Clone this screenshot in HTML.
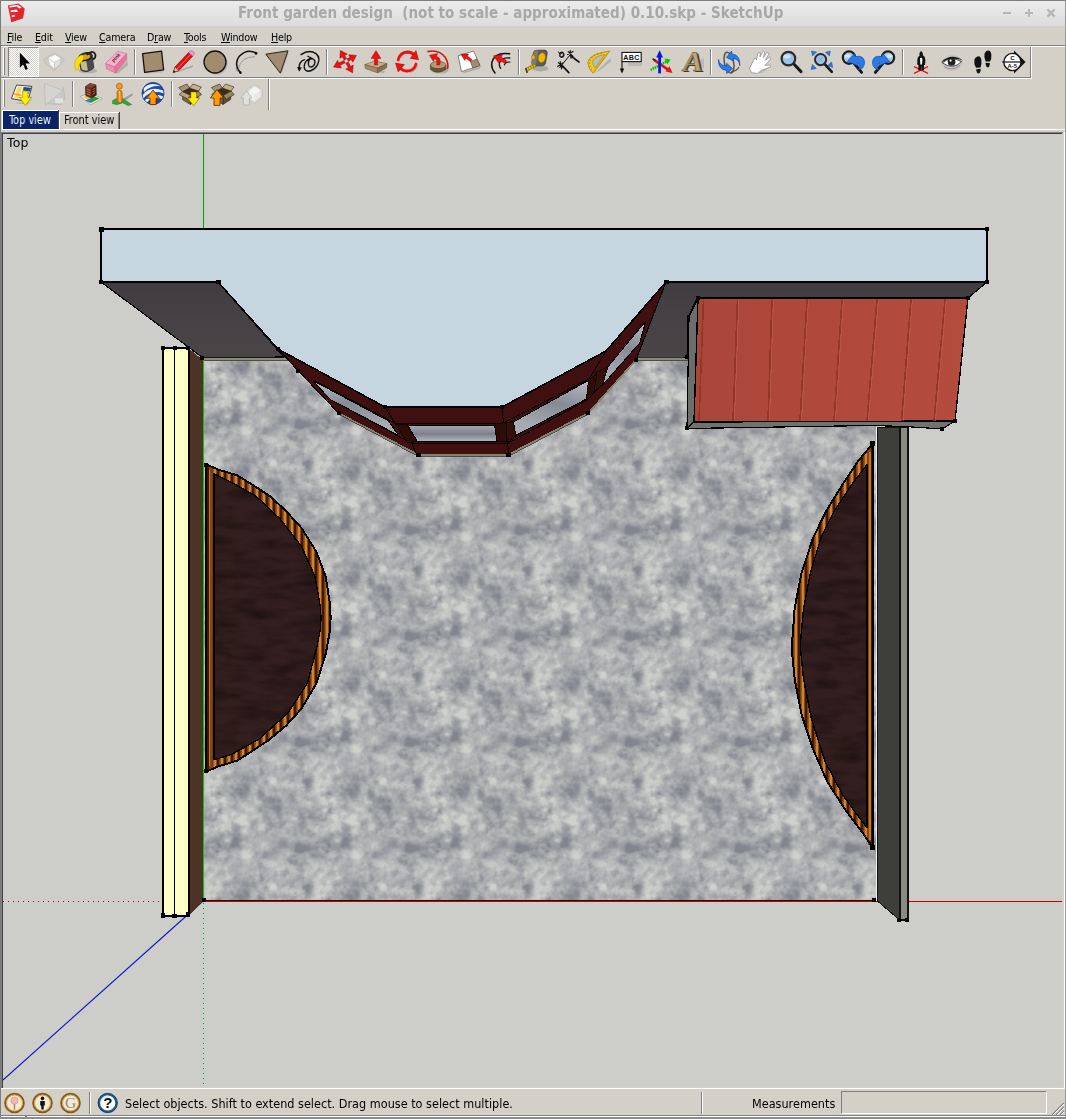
<!DOCTYPE html>
<html>
<head>
<meta charset="utf-8">
<title>Front garden design (not to scale - approximated) 0.10.skp - SketchUp</title>
<style>
html,body{margin:0;padding:0;}
body{width:1066px;height:1119px;position:relative;overflow:hidden;background:#d4d0c8;font-family:"DejaVu Sans Condensed","DejaVu Sans","Liberation Sans",sans-serif;font-size:11px;color:#000;}
.abs{position:absolute;}
.mi,.stext,.tab,#title,.vlabel{will-change:transform;}
svg{position:absolute;overflow:visible;}
#titlebar{left:0;top:0;width:1066px;height:26px;background:linear-gradient(#ececec,#dcdcdc);}
#title{left:238px;top:4px;font-family:"DejaVu Sans Condensed","DejaVu Sans","Liberation Sans",sans-serif;font-weight:bold;font-size:15px;line-height:18px;color:#a8a8a8;white-space:pre;letter-spacing:0.03px;}
.wbtn{top:2px;font-family:"DejaVu Sans","Liberation Sans",sans-serif;font-weight:bold;font-size:14px;line-height:18px;color:#b9b9b9;}
.mi{top:31px;font-size:10.67px;letter-spacing:-0.22px;line-height:14px;white-space:nowrap;}
.ln{position:absolute;}
.dk{background:#808080;}
.wh{background:#ffffff;}
#vp{left:3px;top:134px;width:1059px;height:953px;background:#cdcec9;overflow:hidden;}
.stext{top:1096px;font-size:12.5px;letter-spacing:0.02px;line-height:15px;white-space:nowrap;}
.tab{font-size:12px;transform:scaleX(.905);transform-origin:0 0;line-height:14px;white-space:nowrap;}
</style>
</head>
<body>

<!-- title bar -->
<div class="abs" id="titlebar"></div>
<div class="abs" id="title">Front garden design  (not to scale - approximated) 0.10.skp - SketchUp</div>
<svg style="left:1000px;top:6px" width="60" height="14" viewBox="1000 6 60 14"><g stroke="#b6b6b6" stroke-width="2" fill="none"><path d="M1003 13 L1011 13"/><path d="M1025 13 L1033 13 M1029 9 L1029 17"/><path d="M1047.4 9.4 L1054.6 16.6 M1054.6 9.4 L1047.4 16.6" stroke-width="2.4"/></g></svg>
<svg style="left:0px;top:0px" width="30" height="26" viewBox="0 0 30 26"><path d="M7.8 5.6 L18.6 3.6 L24.6 8.4 L23 18.2 L11.3 22.2Z" fill="#e8282e"/><path d="M7.8 5.6 L14.6 9.8 L11.3 22.2Z" fill="#e02026" opacity=".0"/><path d="M16.2 10.6 L24.6 8.4 L23 18.2 L11.3 22.2 Z" fill="#dc2228" opacity=".55"/>
<path d="M9.4 6 L17.6 4.8 L21.6 7.6 L19.6 8.6 L16.6 6.6 L9.8 7.6Z" fill="#fff"/><path d="M10.6 10.6 L16.4 9.6 L18.2 11.4 L15.2 12.2 L14.6 11.4 L11 12.2Z" fill="#fff"/><path d="M11.6 15.4 L14.6 14.8 L15 16.4 L12 17Z" fill="#fff"/></svg>

<!-- menu bar -->
<div class="abs mi" style="left:7px"><u>F</u>ile</div>
<div class="abs mi" style="left:35px"><u>E</u>dit</div>
<div class="abs mi" style="left:65px"><u>V</u>iew</div>
<div class="abs mi" style="left:99px"><u>C</u>amera</div>
<div class="abs mi" style="left:147px">D<u>r</u>aw</div>
<div class="abs mi" style="left:184px"><u>T</u>ools</div>
<div class="abs mi" style="left:221px"><u>W</u>indow</div>
<div class="abs mi" style="left:271px"><u>H</u>elp</div>

<!-- toolbar frames -->
<div class="ln dk" style="left:1px;top:45px;width:1064px;height:1px"></div>
<div class="ln wh" style="left:1px;top:46px;width:1064px;height:1px"></div>
<div class="ln dk" style="left:1px;top:77px;width:1030px;height:1px"></div>
<div class="ln wh" style="left:1px;top:78px;width:1031px;height:1px"></div>
<div class="ln dk" style="left:1030px;top:47px;width:1px;height:31px"></div>
<div class="ln wh" style="left:1031px;top:47px;width:1px;height:31px"></div>
<div class="ln dk" style="left:268px;top:79px;width:1px;height:31px"></div>
<div class="ln wh" style="left:269px;top:79px;width:1px;height:31px"></div>
<!-- grippers -->
<div class="ln wh" style="left:3px;top:48px;width:1px;height:27px"></div>
<div class="ln dk" style="left:4px;top:48px;width:1px;height:27px"></div>
<div class="ln wh" style="left:3px;top:80px;width:1px;height:27px"></div>
<div class="ln dk" style="left:4px;top:80px;width:1px;height:27px"></div>

<!-- tabs -->
<div class="ln wh" style="left:2px;top:110px;width:57px;height:1px"></div>
<div class="ln wh" style="left:2px;top:110px;width:1px;height:19px"></div>
<div class="abs" style="left:3px;top:111px;width:55px;height:18px;background:#0a246a"></div>
<div class="ln" style="left:58px;top:110px;width:1px;height:19px;background:#404040"></div>
<div class="abs tab" style="left:9px;top:113px;color:#fff">Top view</div>
<div class="ln wh" style="left:60px;top:112px;width:59px;height:1px"></div>
<div class="ln wh" style="left:59px;top:112px;width:1px;height:17px"></div>
<div class="ln" style="left:119px;top:112px;width:1px;height:17px;background:#404040"></div>
<div class="ln dk" style="left:118px;top:113px;width:1px;height:16px"></div>
<div class="abs tab" style="left:64px;top:113px">Front view</div>
<div class="ln wh" style="left:2px;top:129px;width:1063px;height:1px"></div>

<!-- viewport sunken border -->
<div class="ln dk" style="left:1px;top:132px;width:1062px;height:1px"></div>
<div class="ln" style="left:2px;top:133px;width:1060px;height:1px;background:#404040"></div>
<div class="ln dk" style="left:1px;top:132px;width:1px;height:956px"></div>
<div class="ln" style="left:2px;top:133px;width:1px;height:955px;background:#404040"></div>
<div class="ln wh" style="left:1064px;top:132px;width:1px;height:956px"></div>
<div class="ln" style="left:1062px;top:133px;width:2px;height:955px;background:#d4d0c8"></div>

<!-- toolbar icons -->
<div class="abs" style="left:8px;top:47px;width:29px;height:28px;border:1px solid;border-color:#808080 #fff #fff #808080;background-color:#fff;background-image:conic-gradient(#d4d0c8 25%,#fff 0 50%,#d4d0c8 0 75%,#fff 0);background-size:2px 2px;"></div>
<svg style="left:11px;top:50px" width="24" height="24" viewBox="0 0 24 24"><path transform="translate(-.7 -.7)" d="M9.5 3.2 L9.5 18.6 L12.8 15.2 L15.2 20.6 L17.6 19.6 L15.2 14.2 L19.8 14.2 Z" fill="#000" stroke="#fff" stroke-width="1.2" stroke-linejoin="round" paint-order="stroke"/></svg>
<svg style="left:42px;top:50px" width="24" height="24" viewBox="0 0 24 24"><g opacity=".55"><path d="M2 9 L12 3 L22 9 L22 11 L12 21 L2 11Z" fill="#c9c9c9" stroke="#aaa" stroke-width=".8"/></g>
<path d="M6 8 L13 4.5 L19 8.5 L12.5 12.5Z" fill="#fff" stroke="#bbb" stroke-width=".5"/><path d="M6 8 L12.5 12.5 L12.5 19 L7.5 14.5Z" fill="#f4f4f4" stroke="#bbb" stroke-width=".5"/><path d="M12.5 12.5 L19 8.5 L18 14.5 L12.5 19Z" fill="#e2e2e2" stroke="#bbb" stroke-width=".5"/></svg>
<svg style="left:73px;top:50px" width="24" height="24" viewBox="0 0 24 24"><g transform="translate(12 12) scale(1.14) translate(-12.4 -12.2)"><ellipse cx="15" cy="20" rx="8" ry="2.2" fill="#9a9a9a" opacity=".6"/>
<path d="M7 9 L9 19 Q14 22.5 20 17 L18.5 7Z" fill="#c9bb8a" stroke="#2a2a2a" stroke-width="1"/>
<path d="M13 8 L15 20 Q18.5 19.5 20 17 L18.5 7Z" fill="#4a4a4a"/>
<ellipse cx="12.8" cy="7.6" rx="6" ry="3.4" transform="rotate(-14 12.8 7.6)" fill="#3a3a3a" stroke="#1a1a1a" stroke-width="1"/>
<ellipse cx="12.6" cy="7.8" rx="4.4" ry="2.2" transform="rotate(-14 12.6 7.8)" fill="#d9a400"/>
<path d="M14 6 Q19 1 21.5 5.5 Q22 9 19 10" fill="none" stroke="#1a1a1a" stroke-width="1.6"/>
<path d="M9 6 Q3 9 3.4 16 Q4 20 6.2 19.5 Q6.5 14 10.5 10.5 Q12 9 11 6.8Z" fill="#ffe000" stroke="#caa000" stroke-width=".5"/>
<path d="M5.4 20.4 Q6.4 22.6 5.2 23.4 Q4.2 22.6 5.4 20.4Z" fill="#ffe000"/></g></svg>
<svg style="left:104px;top:50px" width="24" height="24" viewBox="0 0 24 24"><path d="M11 23.4 L23.4 11 L24 15 L14 23.6Z" fill="#8c8c8c" opacity=".5"/>
<path d="M1.6 13.6 L13.6 1.2 L22.6 3.6 L10.6 17Z" fill="#f9b0c8" stroke="#b86084" stroke-width=".5"/>
<path d="M1.6 13.6 L10.6 17 L11.4 23 L2.6 19Z" fill="#f48cb0" stroke="#b86084" stroke-width=".5"/>
<path d="M10.6 17 L22.6 3.6 L22.8 9.6 L11.4 23Z" fill="#ea74a0" stroke="#b86084" stroke-width=".5"/>
<text x="0" y="0" transform="translate(9.6 12.4) rotate(-47)" font-size="5" font-weight="bold" font-family="Liberation Sans,sans-serif" fill="#5a2040">pink</text></svg>
<svg style="left:141px;top:50px" width="24" height="24" viewBox="0 0 24 24"><path d="M4 22 L22 20.6 L21.4 22.6 L4.4 23.2Z" fill="#999" opacity=".5"/><path d="M1.6 3.6 L20.6 1.2 L22.6 19.8 L3.6 22.4Z" fill="#a38b6d" stroke="#111" stroke-width="1.3" stroke-linejoin="round"/></svg>
<svg style="left:172px;top:50px" width="24" height="24" viewBox="0 0 24 24"><path d="M4 21.6 L21.6 14.8 L20 17.6 L6 22Z" fill="#888" opacity=".55"/>
<path d="M1.2 22.6 L3 17 L16.6 2.6 L20.6 6.2 L6.8 20.6Z" fill="#e80c0c" stroke="#600" stroke-width=".6"/>
<path d="M16.6 2.6 L18.4 .8 Q20.8 .2 22.2 2.6 Q22.6 4 20.6 6.2Z" fill="#f79ac0" stroke="#a04070" stroke-width=".5"/>
<path d="M1.2 22.6 L3 17 L6.8 20.6Z" fill="#e6c890" stroke="#333" stroke-width=".5"/><path d="M1.2 22.6 L2 20.2 L3.6 21.7Z" fill="#111"/>
<path d="M5 19 L18.6 4.6" stroke="#ff7070" stroke-width="1"/></svg>
<svg style="left:203px;top:50px" width="24" height="24" viewBox="0 0 24 24"><ellipse cx="13.4" cy="13.6" rx="11" ry="11" fill="#888" opacity=".45"/><circle cx="12" cy="12" r="11" fill="#a38b6d" stroke="#111" stroke-width="1.3"/></svg>
<svg style="left:234px;top:50px" width="24" height="24" viewBox="0 0 24 24"><path d="M21 6.6 Q7 7 4.6 18" fill="none" stroke="#9a9a9a" stroke-width="1"/><path d="M2.4 17.6 Q1.6 19.6 4 21.6" fill="none" stroke="#999" stroke-width="1.2"/>
<path d="M22.6 3.2 Q13 -2.2 5 6.6 Q-0.5 14.4 6.6 23" fill="none" stroke="#111" stroke-width="1.5" stroke-linecap="round"/><circle cx="22" cy="3.4" r="1.3" fill="#111"/><circle cx="6.4" cy="22.6" r="1.3" fill="#111"/></svg>
<svg style="left:265px;top:50px" width="24" height="24" viewBox="0 0 24 24"><path d="M4 3.4 L24 2.4 L17 23Z" fill="#999" opacity=".45"/><path d="M.8 4.2 L23 .8 L15.4 23.2Z" fill="#a38b6d" stroke="#222" stroke-width="1" stroke-linejoin="round"/></svg>
<svg style="left:296px;top:50px" width="24" height="24" viewBox="0 0 24 24"><path d="M10 21 Q15 22 21 15" fill="none" stroke="#999" stroke-width="1"/>
<path d="M5 4.6 Q13 -1 20 3.6 Q25 8 21.6 14.6 Q18 21 12 21.2 Q7 20.4 8.6 14 Q10.6 8.6 15.6 8.6 Q20 9.6 18.6 14 Q16.6 18 13.4 16.6 Q11.2 14 13.6 8.6" fill="none" stroke="#111" stroke-width="1.4" stroke-linecap="round"/>
<path d="M8.4 9.6 Q2.4 11.4 3.2 19.6" fill="none" stroke="#111" stroke-width="1.4" stroke-linecap="round"/><path d="M1 17 L3.2 21.4 L6 17.6Z" fill="#111"/><path d="M11.4 6 L15.8 8.2 L11.2 10.6" fill="none" stroke="#111" stroke-width="1.2"/></svg>
<svg style="left:333px;top:50px" width="24" height="24" viewBox="0 0 24 24"><g fill="#f01010" stroke="#8a0000" stroke-width=".5" stroke-linejoin="round"><path d="M13.6 8.9 L11.7 5.5 L14.2 4.1 L7.4 0.5 L6.9 8.2 L9.4 6.8 L11.3 10.1Z"/><path d="M15.2 11.3 L18.3 9.6 L19.7 12.2 L23.4 5.4 L15.7 4.8 L17.1 7.3 L14.0 9.0Z"/><path d="M12.8 12.9 L15.4 17.7 L12.8 19.1 L19.6 22.8 L20.2 15.1 L17.7 16.5 L15.1 11.7Z"/><path d="M11.2 10.4 L5.9 13.0 L4.6 10.4 L0.6 17.0 L8.3 17.9 L7.0 15.3 L12.3 12.8Z"/></g><circle cx="13.2" cy="10.9" r="1.5" fill="#e8d8d4"/></svg>
<svg style="left:364px;top:50px" width="24" height="24" viewBox="0 0 24 24"><path d="M6 21.6 L20 23 L23.6 17 L21 21Z" fill="#888" opacity=".5"/>
<path d="M.8 14.6 L10.6 11 L23 13.6 L13.4 18Z" fill="#c6b08c" stroke="#5a4a30" stroke-width=".5"/>
<path d="M.8 14.6 L13.4 18 L13.6 22.8 L1.4 18.6Z" fill="#a38b6d" stroke="#5a4a30" stroke-width=".5"/>
<path d="M13.4 18 L23 13.6 L22.6 17.8 L13.6 22.8Z" fill="#86704e" stroke="#5a4a30" stroke-width=".5"/>
<path d="M10.4 15 L10.4 8.4 L7 8.4 L12 .6 L17 8.4 L13.6 8.4 L13.6 15Z" fill="#ee1111" stroke="#8a0000" stroke-width=".4"/></svg>
<svg style="left:395px;top:50px" width="24" height="24" viewBox="0 0 24 24"><path d="M15 22.6 Q21 21 23 15" fill="none" stroke="#777" stroke-width="1" opacity=".5"/>
<path d="M3.2 10 Q5 2.4 12.4 2 Q17 2 19.6 5.6" fill="none" stroke="#f01010" stroke-width="2.8" stroke-linecap="round"/>
<path d="M15.2 8.4 L23.6 9.8 L21 .6Z" fill="#f01010" stroke="#8a0000" stroke-width=".4"/>
<path d="M21 14 Q19.4 20.6 12.4 21 Q7.6 21 5 17.6" fill="none" stroke="#f01010" stroke-width="2.8" stroke-linecap="round"/>
<path d="M9.6 14.6 L.4 13 L3.2 22Z" fill="#f01010" stroke="#8a0000" stroke-width=".4"/></svg>
<svg style="left:426px;top:50px" width="24" height="24" viewBox="0 0 24 24"><ellipse cx="14" cy="20.4" rx="8.6" ry="3.2" fill="#888" opacity=".45"/>
<path d="M4.4 15 L4.4 19.4 Q11.4 25 20 19.4 L20 15Z" fill="#6a583c" stroke="#3a2c18" stroke-width=".5"/>
<ellipse cx="12.2" cy="15" rx="7.8" ry="3.6" fill="#b49c78" stroke="#3a2c18" stroke-width=".5"/>
<path d="M1.4 1.6 Q13 -1 19.4 7.6 Q23 14 21.4 19" fill="none" stroke="#dd1111" stroke-width="1.6"/>
<path d="M10.6 15 Q12 9.6 8.6 8.8 L7.4 11.4 L3.4 5.2 L11.6 3.6 L10.4 6.2 Q15.8 8 13.8 15Z" fill="#ee1111" stroke="#8a0000" stroke-width=".4"/></svg>
<svg style="left:457px;top:50px" width="24" height="24" viewBox="0 0 24 24"><path d="M6 22 L24 16.6 L22.6 19 L6.6 23Z" fill="#888" opacity=".5"/>
<path d="M1.2 5.8 L16.6 1 L23 15.6 L4.4 21.6Z" fill="#fff" stroke="#555" stroke-width=".7"/>
<path d="M13.4 11.6 L19.6 9 L23 15.6 L15.8 18Z" fill="#a38b6d" stroke="#444" stroke-width=".6"/>
<path d="M13.6 11.6 L8.8 8.2 L7.8 10.4 L3.8 4 L11.6 4 L10.4 6 L15 9.6Z" fill="#ee1111" stroke="#8a0000" stroke-width=".4"/></svg>
<svg style="left:488px;top:50px" width="24" height="24" viewBox="0 0 24 24"><path d="M21.6 3.8 Q7 1.6 4 12 Q2.6 18 7 23" fill="none" stroke="#111" stroke-width="1.5" stroke-linecap="round"/>
<path d="M21.8 8 Q13 7 11.4 13.4 Q11 16.4 12.6 18.4" fill="none" stroke="#111" stroke-width="1.3" stroke-linecap="round"/>
<path d="M22 12 Q17.4 11.6 16.4 15" fill="none" stroke="#111" stroke-width="1.1" stroke-linecap="round"/>
<path d="M17.4 13.6 L11.6 10.6 L10.6 13 L5.4 5.8 L14.4 4.8 L13.2 7.2 L18.6 10.6Z" fill="#ee1111" stroke="#8a0000" stroke-width=".4"/></svg>
<svg style="left:525px;top:50px" width="24" height="24" viewBox="0 0 24 24"><ellipse cx="15.4" cy="18.6" rx="8" ry="2.8" fill="#888" opacity=".55"/>
<path d="M8.4 2.4 Q9 .2 12 .2 L20 .2 Q22.4 .6 22.2 3.4 L20.4 13.6 Q19.8 15.8 17 15.8 L9.4 15.8 Q6.6 15.4 6.8 12.6Z" fill="#5c5c5c" stroke="#2e2e2e" stroke-width=".7"/>
<path d="M8.4 2.4 Q9 .2 12 .2 L13.4 .2 L10.8 15.8 L9.4 15.8 Q6.6 15.4 6.8 12.6Z" fill="#7a7a7a"/>
<ellipse cx="16.8" cy="7.7" rx="3.7" ry="5.1" transform="rotate(12 16.8 7.7)" fill="#f6b400" stroke="#8a6800" stroke-width=".6"/>
<ellipse cx="8.2" cy="7.3" rx="1.8" ry="2.3" fill="#f6b400" stroke="#8a6800" stroke-width=".5"/>
<path d="M9 14 L.8 18.4 L1.8 21.4 L11.4 16Z" fill="#f6c400" stroke="#6a5000" stroke-width=".6"/>
<path d="M3.4 17.2 L4.2 19.6 M5.6 16 L6.4 18.4 M7.8 14.8 L8.6 17.2" stroke="#6a5000" stroke-width=".6"/><path d="M.7 18 L2.2 23" stroke="#333" stroke-width="1.5"/></svg>
<svg style="left:556px;top:50px" width="24" height="24" viewBox="0 0 24 24"><g stroke="#111" stroke-linecap="round" fill="none"><path d="M3.6 17.6 L14 5" stroke-width="1"/><path d="M6 15.4 L12.8 22.6" stroke-width="1.7"/><path d="M15.4 6.4 L23 12" stroke-width="1.7"/>
<path d="M1.6 16.4 L7 13 M4.2 11.6 L5.6 18.8 M2.4 12.6 L7.4 17.6" stroke-width="1.2"/><path d="M11.6 4.4 L17 1.4 M14.2 .6 L15 8.2 M12.2 1.6 L17 6.4" stroke-width="1.2"/>
<path d="M3.6 3.6 Q6 1 7.6 3.6 Q8.2 6.6 5.8 7.2 Q3.6 7 3.8 5.2" stroke-width="1.4"/><path d="M2.6 2 L4 4.6 L6 2.8" stroke-width="1"/></g></svg>
<svg style="left:587px;top:50px" width="24" height="24" viewBox="0 0 24 24"><path d="M9 23 L24 11.6 L23.6 8 L12 19Z" fill="#8890a0" opacity=".5"/>
<path d="M22.8 1 L6.4 23.2 Q1.6 19.6 .8 12.4 Q2.6 3.6 22.8 1Z" fill="#f4c81c" stroke="#a88400" stroke-width=".8" stroke-linejoin="round"/>
<path d="M17.8 4.6 L7.8 18 Q5 14.6 5.8 11 Q8.6 5.8 17.8 4.6Z" fill="#b4bccc" stroke="#a88400" stroke-width=".6"/>
<path d="M20.4 3.2 L6.6 21.4" stroke="#c89c00" stroke-width=".7"/>
<path d="M1.8 13 L3.4 13 M2.4 9.8 L4 10.4 M4.2 7 L5.6 8 M7 4.8 L7.8 6.2 M10.4 3.4 L10.8 5 M14 2.4 L14.2 4 M2.2 16.6 L3.8 16 M3.8 19.6 L5 18.6" stroke="#7a5c00" stroke-width=".6"/></svg>
<svg style="left:618px;top:50px" width="24" height="24" viewBox="0 0 24 24"><path d="M6 8 L24 8 L24 16 L10 16 L10 12 L6 12Z" fill="#999" opacity=".4"/>
<rect x="4" y="2.4" width="19.2" height="9.2" fill="#fff" stroke="#111" stroke-width="1.1"/>
<text x="13.6" y="9.8" text-anchor="middle" font-family="Liberation Sans,sans-serif" font-weight="bold" font-size="7.2" fill="#111" letter-spacing=".3">ABC</text>
<path d="M4 11.6 L4 20" stroke="#111" stroke-width="1.1"/><path d="M1.8 18.4 L4 23.4 L6.2 18.4Z" fill="#111"/></svg>
<svg style="left:649px;top:50px" width="24" height="24" viewBox="0 0 24 24"><path d="M1.6 20 L17.6 11.4" stroke="#00c400" stroke-width="2.4" stroke-dasharray="1.6 .7"/><path d="M15.6 8.6 L21.6 9.4 L18.4 14.4Z" fill="#00cc00"/>
<path d="M4.8 9.8 L19 19.6" stroke="#e01010" stroke-width="2.6"/><path d="M16.6 21.6 L23.6 23 L20.4 16.2Z" fill="#f01010"/>
<path d="M10.6 23.4 L10.6 6" stroke="#0818e0" stroke-width="2.8"/><path d="M7.2 7.6 L10.6 .2 L14 7.6Z" fill="#0818e0"/><path d="M3.6 8.6 L6.4 10.6" stroke="#222" stroke-width="1.6"/></svg>
<svg style="left:680px;top:50px" width="24" height="24" viewBox="0 0 24 24"><path d="M14 22 L24 18 L24 8 L18 12Z" fill="#999" opacity=".4"/>
<g transform="translate(0 0) skewX(-9) translate(3.6 0)"><text x="13.2" y="22" text-anchor="middle" font-family="Liberation Serif,serif" font-weight="bold" font-size="28" fill="#4a3a26">A</text>
<text x="11.4" y="21.2" text-anchor="middle" font-family="Liberation Serif,serif" font-weight="bold" font-size="28" fill="#bca67e" stroke="#4a3a24" stroke-width=".5">A</text></g></svg>
<svg style="left:717px;top:50px" width="24" height="24" viewBox="0 0 24 24"><ellipse cx="12" cy="12.6" rx="4.6" ry="10.6" fill="none" stroke="#555" stroke-width="1.5" transform="rotate(-12 12 12.6)"/>
<path d="M1.4 9.4 Q2.4 15.4 9.6 16 L9.6 13.2 L15.6 18.6 L9.6 23.6 L9.6 20.4 Q1 19.6 1.4 9.4Z" fill="#2a7ae8" stroke="#0a3a9a" stroke-width=".6"/>
<path d="M22.8 15.8 Q22.4 9 16 8.4 L16.6 11 L9.4 7.4 L14.6 1 L15.2 4 Q23.6 5 22.8 15.8Z" fill="#2a7ae8" stroke="#0a3a9a" stroke-width=".6"/>
<path d="M14 21.6 Q20 21 22 17" fill="none" stroke="#555" stroke-width="1.2"/></svg>
<svg style="left:748px;top:50px" width="24" height="24" viewBox="0 0 24 24"><path d="M7 23 L14 23 L22 17 L20 15Z" fill="#999" opacity=".4"/>
<path d="M3.6 22.6 L1.6 18.4 L6 9 Q7 7.6 8 8.6 L8.4 10 L10 3 Q11 1.6 12.2 2.8 L12 7 L14.6 1.6 Q16 .6 16.8 2 L15.4 7.4 L19 2.6 Q20.6 2.2 20.8 3.8 L17.4 10 L21.4 7.4 Q23 7.4 22.6 9 L17 15.4 L21.4 15 Q23.4 15.6 22.4 17 L13.4 20.4 L9.4 23.4Z" fill="#fff" stroke="#777" stroke-width=".6" stroke-linejoin="round"/></svg>
<svg style="left:779px;top:50px" width="24" height="24" viewBox="0 0 24 24"><path d="M16 15 L22.6 22" stroke="#999" stroke-width="3" opacity=".5" transform="translate(1.4 1)"/>
<path d="M14.4 13.4 L21.8 21.6" stroke="#1a1a1a" stroke-width="3" stroke-linecap="round"/>
<circle cx="9.4" cy="8.6" r="6.8" fill="#9cc4e8" stroke="#2a2a2a" stroke-width="2.2"/><ellipse cx="8" cy="6.4" rx="3.6" ry="2" fill="#d8ecfa" opacity=".8"/></svg>
<svg style="left:810px;top:50px" width="24" height="24" viewBox="0 0 24 24"><path d="M14.6 14 L21.8 21.8" stroke="#1a1a1a" stroke-width="2.6" stroke-linecap="round"/>
<circle cx="10.6" cy="9.6" r="5.6" fill="#9cc4e8" stroke="#2a2a2a" stroke-width="2"/><path d="M8 7 L13.2 12.2 M13.2 7 L8 12.2" stroke="#7aa4d0" stroke-width=".8"/>
<g fill="#2a7ae8" stroke="#0a3a9a" stroke-width=".4"><path d="M1.4 1 L6.6 2 L2.6 6Z"/><path d="M20.4 1 L19.4 6 L15.4 2.2Z"/><path d="M1 19.6 L2.4 14.4 L6.4 18.4Z"/><path d="M21.6 12 L22.8 17.4 L17.6 15.6Z"/></g></svg>
<svg style="left:841px;top:50px" width="24" height="24" viewBox="0 0 24 24"><path d="M12 12 L20.6 22.4" stroke="#1a1a1a" stroke-width="3" stroke-linecap="round"/>
<circle cx="8" cy="7.6" r="6.2" fill="#a8c8e4" stroke="#1e1e1e" stroke-width="2.2"/><ellipse cx="6.4" cy="6" rx="3" ry="1.8" fill="#e0f0fa" opacity=".8"/>
<path d="M6.4 11.4 L13.4 3.6 L14.4 6.6 Q23 4.6 23.6 12.6 Q23 19 17.4 20 Q20.4 15.4 16.4 12.6 L17.4 16Z" fill="#2a7ae8" stroke="#0a3a9a" stroke-width=".6"/></svg>
<svg style="left:872px;top:50px" width="24" height="24" viewBox="0 0 24 24"><path d="M12 12 L3.4 22.4" stroke="#1a1a1a" stroke-width="3" stroke-linecap="round"/>
<circle cx="16" cy="7.6" r="6.2" fill="#a8c8e4" stroke="#1e1e1e" stroke-width="2.2"/><ellipse cx="17.6" cy="6" rx="3" ry="1.8" fill="#e0f0fa" opacity=".8"/>
<path d="M17.6 11.4 L10.6 3.6 L9.6 6.6 Q1 4.6 .4 12.6 Q1 19 6.6 20 Q3.6 15.4 7.6 12.6 L6.6 16Z" fill="#2a7ae8" stroke="#0a3a9a" stroke-width=".6"/></svg>
<svg style="left:909px;top:50px" width="24" height="24" viewBox="0 0 24 24"><path d="M5 16.6 L19 23.4 M19 16.6 L5 23.4" stroke="#ee1111" stroke-width="1.3"/>
<path d="M12 .6 L12.8 2 Q14.4 2.6 13.8 5 Q16.4 6.6 16.4 10 L16 15 L15 15 L14.8 20.6 L12.6 20.6 L12.2 16 L11.8 20.6 L9.4 20.6 L9.4 15 L8.2 14.6 L8.4 9 Q8.8 6.4 10.6 5.4 Q9.8 2.8 11.4 2Z" fill="#111"/>
<path d="M11 8 Q12.6 7 13.4 9 L13 14.6 L11.4 14.6Z" fill="#fff"/></svg>
<svg style="left:940px;top:50px" width="24" height="24" viewBox="0 0 24 24"><ellipse cx="12" cy="13" rx="10.6" ry="8" fill="#bdbdbd" opacity=".55"/>
<path d="M1 12.4 Q11 2.4 23 10.4 Q14 6.4 1 12.4Z" fill="#111"/>
<path d="M2.4 12.8 Q11 5.6 21.6 11.6 Q13 20.4 2.4 12.8Z" fill="#fff" stroke="#222" stroke-width=".8"/>
<circle cx="11.6" cy="11.8" r="3.9" fill="#222"/><circle cx="10.6" cy="10.6" r="1.1" fill="#fff"/>
<path d="M4 16.4 Q12 22 20 15.4" fill="none" stroke="#888" stroke-width=".9"/></svg>
<svg style="left:971px;top:50px" width="24" height="24" viewBox="0 0 24 24"><g fill="#111"><path d="M6.6 6.4 Q9.6 5.4 10.4 10 Q10.8 14.6 9.6 17.4 L5 17.8 Q2.6 13.6 3.4 9.6 Q4.4 6.8 6.6 6.4Z"/><path d="M5.2 19.2 L9.6 18.8 Q10 22.6 7.8 23.4 Q5.4 23.4 5.2 19.2Z"/>
<path d="M16.6 .6 Q19.8 .2 20.4 5 Q20.6 9 19 11.6 L14.6 11.4 Q12.6 7.6 13.6 3.6 Q14.6 1 16.6 .6Z"/><path d="M14.6 12.8 L18.8 13 Q19 16.8 16.8 17.4 Q14.6 17.2 14.6 12.8Z"/></g></svg>
<svg style="left:1002px;top:50px" width="24" height="24" viewBox="0 0 24 24"><path d="M12 .6 L23.6 12 L12 23.4Z" fill="#111"/><circle cx="10.4" cy="12" r="8.6" fill="#fff" stroke="#111" stroke-width="1.3"/>
<path d="M.2 12 L19.6 12" stroke="#111" stroke-width="1.2"/>
<text x="10.4" y="10.2" text-anchor="middle" font-family="Liberation Sans,sans-serif" font-weight="bold" font-size="6.2" fill="#111">C</text>
<text x="10.2" y="18.4" text-anchor="middle" font-family="Liberation Sans,sans-serif" font-weight="bold" font-size="5.8" fill="#111">A-5</text></svg>
<div class="ln dk" style="left:134px;top:49px;width:1px;height:26px"></div><div class="ln wh" style="left:135px;top:49px;width:1px;height:26px"></div>
<div class="ln dk" style="left:326px;top:49px;width:1px;height:26px"></div><div class="ln wh" style="left:327px;top:49px;width:1px;height:26px"></div>
<div class="ln dk" style="left:518px;top:49px;width:1px;height:26px"></div><div class="ln wh" style="left:519px;top:49px;width:1px;height:26px"></div>
<div class="ln dk" style="left:710px;top:49px;width:1px;height:26px"></div><div class="ln wh" style="left:711px;top:49px;width:1px;height:26px"></div>
<div class="ln dk" style="left:902px;top:49px;width:1px;height:26px"></div><div class="ln wh" style="left:903px;top:49px;width:1px;height:26px"></div>
<svg style="left:10px;top:82px" width="24" height="24" viewBox="0 0 24 24"><path d="M4 21 L18 22.6 L23 14 L20 20Z" fill="#888" opacity=".5"/>
<path d="M6.6 3 L22 4.4 L17.6 19.6 L1.4 16.6Z" fill="#fdfdf4" stroke="#333" stroke-width=".9" stroke-linejoin="round"/>
<path d="M7.6 4.6 L12 5 L9 17 L4 16Z" fill="#f6d24a" opacity=".85"/><path d="M4.4 11 L12 12.4 L11.6 14.4 L4 13Z" fill="#f0a020" opacity=".8"/>
<path d="M13.6 5 L21 5.8 L20 9.4 L12.8 8.4Z" fill="#1c4c8c"/><path d="M13 9 L20 10 L19.4 12 L12.6 11Z" fill="#88a8c8"/>
<path d="M12.6 9 L18 9 L18 15.4 L21.4 15.4 L15.4 23.4 L9.2 15.4 L12.6 15.4Z" fill="#ffee00" stroke="#7a6a00" stroke-width=".5"/></svg>
<svg style="left:42px;top:82px" width="24" height="24" viewBox="0 0 24 24"><g opacity=".75"><path d="M2.6 1.6 L20.4 8.4 L21.4 5.4 L23 17.6 L20 18 L19.6 22.6 L5 21.6 L3.6 23Z" fill="#c6c6c6" stroke="#aaa" stroke-width=".7" stroke-linejoin="round"/>
<path d="M2.6 1.6 L20.4 8.4 L3.6 23Z" fill="#d6d6d6" stroke="#b4b4b4" stroke-width=".5"/><path d="M13 16 L21 16.6 L21 21 L13 21Z" fill="#e8e8e8"/></g></svg>
<svg style="left:79px;top:82px" width="24" height="24" viewBox="0 0 24 24"><path d="M1.4 14.4 L11.4 10.8 L23.4 16.6 L11.6 22.8Z" fill="#f4f0e0" stroke="#8a8a7a" stroke-width=".6"/>
<path d="M4 15 L11.4 12.2 L16 14.4 L8.4 17.4Z" fill="#e8c44a"/><path d="M8.4 17.4 L16 14.4 L20.6 16.6 L11.8 21Z" fill="#2a9a3a"/><path d="M6 18.4 L10 17 L13 18.4 L11.4 21Z" fill="#3a7ad8"/>
<path d="M6.4 4.6 L11 1.4 L17 3 L17.2 13 L12.6 16 L6.8 13.6Z" fill="#6a2c1c" stroke="#2a1208" stroke-width=".6"/><path d="M12.4 6 L17 3 L17.2 13 L12.6 16Z" fill="#4a1c10"/>
<path d="M6.4 4.6 L11 1.4 L17 3 L12.4 6Z" fill="#8a4430"/><path d="M7.6 7 L11.4 8.4 M7.6 9.4 L11.4 10.8 M7.6 11.8 L11.4 13.2 M13.6 7.6 L16.2 6 M13.6 10 L16.2 8.4 M13.6 12.4 L16.2 10.8" stroke="#c89070" stroke-width=".7"/></svg>
<svg style="left:110px;top:82px" width="24" height="24" viewBox="0 0 24 24"><path d="M9 19 L22 11.6 L23 13 L12 21Z" fill="#7a7a7a" opacity=".6"/>
<path d="M2.6 18.6 Q9 14.6 14 17.4 L21.6 22.6 L18 23.4 L12.6 20.8 Q7 23.8 2.6 21.6Z" fill="#36a83a" stroke="#1a6a1e" stroke-width=".5"/>
<path d="M7 9.4 Q9.4 6.4 12 9.4 L12.4 19.4 Q9.6 21.4 7 19.4Z" fill="#f08a10" stroke="#9a4c00" stroke-width=".6"/><path d="M9.4 9 L10 20.2" stroke="#ffc060" stroke-width="1.2"/>
<circle cx="9.4" cy="4.2" r="3" fill="#f29a20" stroke="#9a4c00" stroke-width=".6"/></svg>
<svg style="left:141px;top:82px" width="24" height="24" viewBox="0 0 24 24"><circle cx="12" cy="11.4" r="11" fill="#1c48b4"/>
<path d="M2.4 6 Q10 -1 20 4.2 Q10 3 3 10Z M1.2 13.4 Q8 3.6 22.4 8.4 L23 11.4 Q10 7 1.8 17Z M3.4 19 Q10 9.4 22.8 14.4 L21.4 17.6 Q11 13.4 5.6 21Z" fill="#e8f0fc"/>
<circle cx="12" cy="11.4" r="11" fill="none" stroke="#0c2a7a" stroke-width=".7"/>
<path d="M9 22.6 L9 16.4 L5.4 16.4 L12 8 L18.6 16.4 L15 16.4 L15 22.6Z" fill="#ff9a00" stroke="#5a2c00" stroke-width=".8"/></svg>
<svg style="left:178px;top:82px" width="24" height="24" viewBox="0 0 24 24"><path d="M4.4 9.6 L12.6 13.4 L12.4 22.4 L4.6 17.8Z" fill="#7a6648" stroke="#2a2010" stroke-width=".6"/><path d="M12.6 13.4 L20.4 9 L20 17.6 L12.4 22.4Z" fill="#5e4c34" stroke="#2a2010" stroke-width=".6"/>
<path d="M4.4 9.6 L11.6 6 L20.4 9 L12.6 13.4Z" fill="#3a2e1e" stroke="#2a2010" stroke-width=".5"/>
<path d="M4.4 9.6 L11.6 6 L9 2 L.8 5.6Z" fill="#a89474" stroke="#2a2010" stroke-width=".6"/><path d="M11.6 6 L20.4 9 L23.4 5 L15 2Z" fill="#c4b08c" stroke="#2a2010" stroke-width=".6"/>
<path d="M4.4 9.6 L12.6 13.4 L9.6 17 L1 12.6Z" fill="#b8a280" stroke="#2a2010" stroke-width=".6"/><path d="M12.6 13.4 L20.4 9 L23.6 12.6 L15.6 17.4Z" fill="#9a8462" stroke="#2a2010" stroke-width=".6"/><path d="M12.8 10 L18.4 10 L18.4 16 L21.6 16 L15.6 23.8 L9.6 16 L12.8 16Z" fill="#ffee00" stroke="#6a5c00" stroke-width=".5"/></svg>
<svg style="left:209px;top:82px" width="24" height="24" viewBox="0 0 24 24"><g transform="translate(1.6 0)"><path d="M4.4 9.6 L12.6 13.4 L12.4 22.4 L4.6 17.8Z" fill="#7a6648" stroke="#2a2010" stroke-width=".6"/><path d="M12.6 13.4 L20.4 9 L20 17.6 L12.4 22.4Z" fill="#5e4c34" stroke="#2a2010" stroke-width=".6"/>
<path d="M4.4 9.6 L11.6 6 L20.4 9 L12.6 13.4Z" fill="#3a2e1e" stroke="#2a2010" stroke-width=".5"/>
<path d="M4.4 9.6 L11.6 6 L9 2 L.8 5.6Z" fill="#a89474" stroke="#2a2010" stroke-width=".6"/><path d="M11.6 6 L20.4 9 L23.4 5 L15 2Z" fill="#c4b08c" stroke="#2a2010" stroke-width=".6"/>
<path d="M4.4 9.6 L12.6 13.4 L9.6 17 L1 12.6Z" fill="#b8a280" stroke="#2a2010" stroke-width=".6"/><path d="M12.6 13.4 L20.4 9 L23.6 12.6 L15.6 17.4Z" fill="#9a8462" stroke="#2a2010" stroke-width=".6"/></g><path d="M5 23.4 L5 16 L1.4 16 L8 7.6 L14.6 16 L11 16 L11 23.4Z" fill="#ff9a00" stroke="#5a2c00" stroke-width=".8"/></svg>
<svg style="left:240px;top:82px" width="24" height="24" viewBox="0 0 24 24"><g opacity=".8"><path d="M6 8.6 L14.6 2.6 L22.6 8 L22.4 15.6 L14 21.6 L6.4 16Z" fill="#dcdcdc" stroke="#b8b8b8" stroke-width=".7"/>
<path d="M8.6 9 L14.6 4.6 L20.6 8.6 L14.4 12.6Z" fill="#fff"/><path d="M14.4 12.6 L20.6 8.6 L20.4 14.6 L14.2 19.4Z" fill="#f0f0f0"/><path d="M8.6 9 L14.4 12.6 L14.2 19.4 L8.8 15Z" fill="#fafafa"/>
<path d="M3.4 23 L3.4 16 L.8 16 L6.4 8.8 L12 16 L9.4 16 L9.4 23Z" fill="#e4e4e4" stroke="#a8a8a8" stroke-width=".8"/></g></svg>
<div class="ln dk" style="left:72px;top:81px;width:1px;height:26px"></div><div class="ln wh" style="left:73px;top:81px;width:1px;height:26px"></div>
<div class="ln dk" style="left:171px;top:81px;width:1px;height:26px"></div><div class="ln wh" style="left:172px;top:81px;width:1px;height:26px"></div>
<!-- viewport -->
<div class="abs" id="vp">
<svg id="scene" width="1059" height="953" viewBox="3 134 1059 953" style="left:0;top:0" shape-rendering="crispEdges">
<defs>
<filter id="marble" x="0" y="0" width="100%" height="100%" color-interpolation-filters="sRGB">
<feTurbulence type="fractalNoise" baseFrequency="0.034" numOctaves="4" seed="11" stitchTiles="stitch" result="n1"/>
<feTurbulence type="fractalNoise" baseFrequency="0.11" numOctaves="3" seed="5" stitchTiles="stitch" result="n2"/>
<feComposite in="n1" in2="n2" operator="arithmetic" k1="0" k2="0.62" k3="0.38" k4="0" result="n"/>
<feColorMatrix in="n" type="matrix" values="0 0 0 0 0  0 0 0 0 0  0 0 0 0 0  2.0 1.2 0 0 -1.07" result="a"/>
<feFlood flood-color="#d0d1cd" result="light"/>
<feComposite in="light" in2="a" operator="in" result="l2"/>
<feFlood flood-color="#82858e" result="dark"/>
<feMerge><feMergeNode in="dark"/><feMergeNode in="l2"/></feMerge>
</filter>
<pattern id="marblep" x="204" y="356" width="110" height="106" patternUnits="userSpaceOnUse"><rect width="110" height="106" filter="url(#marble)"/></pattern>
<filter id="soil" x="0" y="0" width="100%" height="100%" color-interpolation-filters="sRGB">
<feTurbulence type="fractalNoise" baseFrequency="0.03 0.1" numOctaves="3" seed="3" result="n"/>
<feColorMatrix in="n" type="matrix" values="0 0 0 0 0.205  0 0 0 0 0.12  0 0 0 0 0.12  0 0 0 0 1" result="base"/>
<feColorMatrix in="n" type="matrix" values="0 0 0 0 0.08  0 0 0 0 0.04  0 0 0 0 0.04  1.2 0 0 0 -0.42" result="d"/>
<feMerge result="m"><feMergeNode in="base"/><feMergeNode in="d"/></feMerge>
<feComposite in="m" in2="SourceGraphic" operator="in"/>
</filter>
<pattern id="wood" width="7" height="20" patternUnits="userSpaceOnUse">
<rect width="7" height="20" fill="#9a5418"/><rect x="0" width="1.8" height="20" fill="#3e1a05"/><rect x="1.8" width="1" height="20" fill="#7a3c0e"/><rect x="4" width="1.6" height="20" fill="#cc842e"/><rect x="5.6" width="1.4" height="20" fill="#8a4610"/>
</pattern>
<pattern id="woodv" width="7" height="11" patternUnits="userSpaceOnUse">
<rect width="7" height="11" fill="#a85c18"/><rect y="0" width="7" height="3" fill="#6a300c"/><rect y="6" width="7" height="2" fill="#d4862c"/>
</pattern>
<linearGradient id="roofred" x1="0" x2="1" y1="0" y2="0"><stop offset="0" stop-color="#a9463a"/><stop offset=".5" stop-color="#b0493c"/><stop offset="1" stop-color="#b44c3e"/></linearGradient>
<linearGradient id="glassc" x1="0" x2="0" y1="0" y2="1"><stop offset="0" stop-color="#a9adb8"/><stop offset=".55" stop-color="#7c808a"/><stop offset="1" stop-color="#b4b8c2"/></linearGradient>
<linearGradient id="glassl" x1="0" x2=".4" y1="0" y2="1"><stop offset="0" stop-color="#b8bcc6"/><stop offset=".5" stop-color="#868a94"/><stop offset="1" stop-color="#a8acb6"/></linearGradient>
<linearGradient id="glassr" x1="1" x2=".6" y1="0" y2="1"><stop offset="0" stop-color="#b8bcc6"/><stop offset=".5" stop-color="#868a94"/><stop offset="1" stop-color="#a8acb6"/></linearGradient>
<linearGradient id="wallg" x1="0" x2="0" y1="0" y2="1"><stop offset="0" stop-color="#403c40"/><stop offset="1" stop-color="#4a4648"/></linearGradient>
<clipPath id="groundclip"><path d="M204 358 L876 358 L876 900 L204 900Z"/></clipPath>
</defs>

<!-- axes (behind geometry) -->
<path d="M203.5 134 L203.5 901" stroke="#00a400" stroke-width="1"/>
<path d="M203 901.5 L1062 901.5" stroke="#c80000" stroke-width="1"/>
<path d="M3 901.5 L162 901.5" stroke="#c80000" stroke-width="1" stroke-dasharray="1.4 3.6"/>
<path d="M203.5 903 L203.5 1087" stroke="#00a400" stroke-width="1" stroke-dasharray="1.4 3.6"/>
<path d="M203 901 L3 1080" stroke="#1010c8" stroke-width="1.1" shape-rendering="geometricPrecision"/>

<!-- ground -->
<rect x="204" y="356" width="672" height="544" fill="url(#marblep)"/>
<path d="M204 900.5 L876 900.5" stroke="#111" stroke-width="1"/>
<path d="M204 901.5 L876 901.5" stroke="#c80000" stroke-width="1"/>

<!-- left fence -->
<rect x="162.5" y="348" width="26" height="568" fill="#ffffc6" stroke="#000" stroke-width="2"/>
<path d="M174.5 348 L174.5 916" stroke="#000" stroke-width="1.3"/>
<path d="M189.5 349 L203 360 L203 901 L189.5 915Z" fill="#4b3426"/>

<path d="M203.5 360 L203.5 901" stroke="#10c010" stroke-width="1"/>
<!-- right wall -->
<path d="M876.5 427 L876.5 901" stroke="#e8f0f4" stroke-width="1.4"/>
<path d="M877.5 427 L899.5 427 L899.5 920 L877.5 901Z" fill="#3e3f3b" stroke="#111" stroke-width="1"/>
<path d="M900 427 L908 427 L908 920 L900 920Z" fill="#8a8a82" stroke="#111" stroke-width="1.2"/>

<!-- left bed -->
<path d="M205.5 464.0 L218.0 469.5 L237.6 475.5 L259.0 489.0 L271.0 497.0 L286.0 511.0 L301.5 528.0 L316.5 552.0 L325.7 576.6 L329.5 601.0 L330.7 618.0 L329.5 633.0 L325.7 654.0 L316.6 683.0 L301.4 708.8 L286.2 725.5 L268.0 740.7 L237.6 760.5 L217.8 766.5 L205.6 772.0Z" fill="url(#wood)" stroke="#000" stroke-width="2" stroke-linejoin="round"/>
<path d="M209.8 466 L209.8 770" stroke="#8a440c" stroke-width="5"/><path d="M209.2 470 L209.2 766" stroke="#c47622" stroke-width="2"/><path d="M207.4 466 L207.4 770" stroke="#3a1804" stroke-width="2.4"/>
<path d="M205.5 464.0 L218.0 469.5 L237.6 475.5 L259.0 489.0 L271.0 497.0 L286.0 511.0 L301.5 528.0 L316.5 552.0 L325.7 576.6 L329.5 601.0 L330.7 618.0 L329.5 633.0 L325.7 654.0 L316.6 683.0 L301.4 708.8 L286.2 725.5 L268.0 740.7 L237.6 760.5 L217.8 766.5 L205.6 772.0Z" fill="none" stroke="#000" stroke-width="2" stroke-linejoin="round"/>
<path d="M214.0 474.0 L231.5 482.4 L255.8 496.0 L280.0 518.8 L301.4 546.2 L315.0 576.6 L320.4 607.0 L321.0 618.0 L320.4 629.0 L316.6 648.0 L307.5 683.0 L287.7 713.3 L258.8 739.2 L231.5 754.4 L214.0 759.7Z" fill="#2e1a1b" filter="url(#soil)"/>
<path d="M214.0 474.0 L231.5 482.4 L255.8 496.0 L280.0 518.8 L301.4 546.2 L315.0 576.6 L320.4 607.0 L321.0 618.0 L320.4 629.0 L316.6 648.0 L307.5 683.0 L287.7 713.3 L258.8 739.2 L231.5 754.4 L214.0 759.7Z" fill="none" stroke="#000" stroke-width="1.4" stroke-linejoin="round"/>
<!-- right bed -->
<path d="M873.3 443.0 L858.6 460.5 L842.9 484.0 L827.0 509.7 L813.4 537.0 L801.6 572.5 L794.7 607.9 L792.2 641.3 L791.8 650.0 L794.7 679.3 L801.6 714.7 L813.4 750.0 L827.2 781.5 L844.8 809.0 L862.5 832.5 L873.3 848.3Z" fill="url(#wood)" stroke="#000" stroke-width="2" stroke-linejoin="round"/>
<path d="M870 447 L870 845" stroke="#8a440c" stroke-width="5"/><path d="M870.4 452 L870.4 840" stroke="#c47622" stroke-width="2"/><path d="M872 447 L872 845" stroke="#3a1804" stroke-width="2"/>
<path d="M873.3 443.0 L858.6 460.5 L842.9 484.0 L827.0 509.7 L813.4 537.0 L801.6 572.5 L794.7 607.9 L792.2 641.3 L791.8 650.0 L794.7 679.3 L801.6 714.7 L813.4 750.0 L827.2 781.5 L844.8 809.0 L862.5 832.5 L873.3 848.3Z" fill="none" stroke="#000" stroke-width="2" stroke-linejoin="round"/>
<path d="M867.0 464.5 L850.7 486.0 L835.0 509.7 L821.3 537.0 L810.5 572.5 L803.6 608.0 L800.6 641.0 L800.6 650.0 L803.6 679.3 L811.4 718.6 L825.2 761.8 L842.9 795.2 L858.6 816.8 L867.0 827.6Z" fill="#2e1a1b" filter="url(#soil)"/>
<path d="M867.0 464.5 L850.7 486.0 L835.0 509.7 L821.3 537.0 L810.5 572.5 L803.6 608.0 L800.6 641.0 L800.6 650.0 L803.6 679.3 L811.4 718.6 L825.2 761.8 L842.9 795.2 L858.6 816.8 L867.0 827.6Z" fill="none" stroke="#000" stroke-width="1.4" stroke-linejoin="round"/>

<!-- house wall left -->
<path d="M101 282 L218 282 L284 357 L203 358 Z" fill="url(#wallg)" stroke="#000" stroke-width="1.2" stroke-linejoin="round"/>
<path d="M203 357.5 L289 357.5 L291 360.5 L205 360.5Z" fill="#8c8c74" stroke="#222" stroke-width=".6"/>
<!-- house wall right -->
<path d="M666 282 L987 282 L968 298 L697 298 L688 318 L687 358 L636 360Z" fill="url(#wallg)" stroke="#000" stroke-width="1.2" stroke-linejoin="round"/>
<path d="M637 357.5 L687 357.5 L687 360.5 L635 360.5Z" fill="#8c8c74" stroke="#222" stroke-width=".6"/>

<!-- bay window frame -->
<path d="M278 349 L385 407 L502 407 L606 351 L666 282 L636 360 L588.5 413 L508 455 L418.5 455 L339 413.5 L298.5 371Z" fill="#400f10" stroke="#000" stroke-width="1.2" stroke-linejoin="round"/>
<!-- sill -->
<path d="M339 413.5 L418.5 455 L508 455 L588.5 413 L636 360" fill="none" stroke="#84846c" stroke-width="1.8"/>
<path d="M339 414.5 L418.5 456.5 L508 456.5 L589 414" fill="none" stroke="#222" stroke-width=".7"/>
<!-- frame internal edges -->
<path d="M385 407 L395 423 L503.5 423 L502 407 M395 423 L313 380 M503.5 423 L589 379 L606 351 M412 443.5 L507.5 443.5 L509 453 M412 443.5 L415.8 453 M412 443.5 L330 399 M507.5 443.5 L587 400 L602 385 M298.5 371 L339 413.5" fill="none" stroke="#000" stroke-width="1"/>
<!-- glass panes -->
<path d="M407.5 425 L494.6 425 L497 441.5 L417.3 441.5Z" fill="url(#glassc)" stroke="#000" stroke-width="1"/>
<path d="M312.8 380.5 L388.6 421 L398.4 435.3 L330 399.3Z" fill="url(#glassl)" stroke="#000" stroke-width="1"/>
<path d="M513.6 421.8 L588.5 380.4 L586.5 399 L515.6 435.5Z" fill="url(#glassr)" stroke="#000" stroke-width="1"/>
<path d="M608 366.6 L645.6 321.3 L639.7 343 L602.3 385.3Z" fill="url(#glassr)" stroke="#000" stroke-width="1"/>
<!-- mullions -->
<path d="M395 424 L407.5 425 L417.3 441.5 L408 443Z" fill="#2e0d05" stroke="#000" stroke-width=".7"/>
<path d="M494.6 424 L506 422.5 L507 442 L497 441.5Z" fill="#2e0d05" stroke="#000" stroke-width=".7"/>
<path d="M506 422.5 L513.6 421.8 L515.6 435.5 L507.4 443Z" fill="#341006" stroke="#000" stroke-width=".7"/>
<path d="M588.5 380.4 L597 372 L594 392 L586.5 399Z" fill="#2e0d05" stroke="#000" stroke-width=".7"/>
<path d="M597 372 L608 366.6 L602.3 385.3 L594 392Z" fill="#341006" stroke="#000" stroke-width=".7"/>

<!-- roof -->
<path d="M101 229 L987 229 L987 282 L666 282 L606 351 L502 407 L385 407 L278 349 L218 282 L101 282Z" fill="#c5d6e1" stroke="#000" stroke-width="1.6" stroke-linejoin="round"/>

<!-- shed -->
<path d="M689 317 L698 298 L694 422 L687 428Z" fill="#6c6e6c" stroke="#000" stroke-width="1.2" stroke-linejoin="round"/>
<path d="M687 428.5 L694 422 L955 421 L942 429 L905 426.5 L872 425.5Z" fill="#70726e" stroke="#000" stroke-width="1.2" stroke-linejoin="round"/>
<path d="M698 298 L968 298 L955 421 L694 422Z" fill="url(#roofred)" stroke="#000" stroke-width="1.4" stroke-linejoin="round"/>
<g stroke="#8e3428" stroke-width="1.6" fill="none" opacity=".85"><path d="M737.5 299 L733 421"/><path d="M772 299 L768 421"/><path d="M807 299 L800 421"/><path d="M842 299 L834 421"/><path d="M877 299 L867 421"/><path d="M911 299 L901.5 421"/><path d="M945 299 L934 421"/><path d="M703.5 299 L699 421"/></g>
<g stroke="#c25a4a" stroke-width="1" fill="none" opacity=".7"><path d="M739 299 L734.5 421"/><path d="M773.5 299 L769.5 421"/><path d="M808.5 299 L801.5 421"/><path d="M843.5 299 L835.5 421"/><path d="M878.5 299 L868.5 421"/><path d="M912.5 299 L903 421"/><path d="M946.5 299 L935.5 421"/></g>

<!-- endpoints -->
<g fill="#000">
<rect x="99" y="227" width="5" height="5"/><rect x="99" y="280" width="4" height="4"/><rect x="216" y="280" width="5" height="4"/><rect x="985" y="227" width="4" height="4"/><rect x="985" y="280" width="4" height="4"/><rect x="664" y="280" width="5" height="4"/>
<rect x="161" y="346" width="4" height="4"/><rect x="173" y="346" width="4" height="4"/><rect x="186" y="346" width="4" height="4"/><rect x="200" y="356" width="4" height="4"/>
<rect x="161" y="913" width="4" height="5"/><rect x="172" y="914" width="5" height="4"/><rect x="186" y="912" width="4" height="5"/><rect x="202" y="898" width="4" height="4"/>
<rect x="872" y="898" width="4" height="4"/><rect x="897" y="918" width="4" height="4"/><rect x="905" y="918" width="4" height="4"/>
<rect x="870" y="441" width="5" height="5"/><rect x="870" y="845" width="5" height="5"/><rect x="204" y="463" width="4" height="4"/><rect x="204" y="769" width="4" height="4"/>
<rect x="416" y="453" width="5" height="4"/><rect x="506" y="453" width="5" height="4"/><rect x="337" y="411" width="4" height="4"/><rect x="586" y="411" width="4" height="4"/><rect x="383" y="405" width="4" height="4"/><rect x="500" y="405" width="4" height="4"/>
<rect x="685" y="426" width="4" height="4"/><rect x="940" y="427" width="4" height="4"/><rect x="953" y="419" width="4" height="4"/><rect x="966" y="296" width="4" height="4"/><rect x="696" y="296" width="4" height="4"/><rect x="687" y="315" width="3" height="4"/><rect x="685" y="355" width="4" height="4"/><rect x="634" y="358" width="4" height="4"/><rect x="296" y="369" width="4" height="4"/><rect x="276" y="347" width="4" height="4"/>
</g>
</svg>

<div class="abs vlabel" style="left:4px;top:1px;font-family:DejaVu Sans,Liberation Sans,sans-serif;font-size:12.5px;line-height:15px;letter-spacing:.15px">Top</div>
</div>
<!-- status bar -->
<div class="ln wh" style="left:1px;top:1088px;width:1064px;height:1px"></div>
<svg style="left:3px;top:1092px" width="100" height="24" viewBox="0 0 100 24">
<g><circle cx="11.5" cy="11" r="9.3" fill="#f4ead4" stroke="#8a5a14" stroke-width="2"/><circle cx="11.5" cy="11" r="8" fill="none" stroke="#caa05a" stroke-width="1"/>
<circle cx="11.5" cy="8.6" r="3.6" fill="#f4b8b0" stroke="#c88a80" stroke-width=".6"/><path d="M11.5 12 L11.5 17.6" stroke="#a87c70" stroke-width="1.4"/></g>
<g><circle cx="39.5" cy="11" r="9.3" fill="#f4ead4" stroke="#8a5a14" stroke-width="2"/><circle cx="39.5" cy="11" r="8" fill="none" stroke="#caa05a" stroke-width="1"/>
<circle cx="39.5" cy="6.4" r="1.8" fill="#111"/><path d="M37.2 9 L41.8 9 L41.8 13.4 L40.8 13.4 L40.6 17.6 L38.4 17.6 L38.2 13.4 L37.2 13.4Z" fill="#111"/></g>
<g><circle cx="67.5" cy="11" r="9.3" fill="#f4ead4" stroke="#8a5a14" stroke-width="2"/><circle cx="67.5" cy="11" r="8" fill="none" stroke="#caa05a" stroke-width="1"/>
<text x="67.6" y="16.2" text-anchor="middle" font-family="Liberation Serif,serif" font-size="15.5" fill="#8a8a84">G</text></g>
</svg>
<div class="ln dk" style="left:89px;top:1092px;width:1px;height:22px"></div>
<div class="ln wh" style="left:90px;top:1092px;width:1px;height:22px"></div>
<svg style="left:96px;top:1092px" width="24" height="24" viewBox="0 0 24 24"><circle cx="11.7" cy="11" r="8.7" fill="#fff" stroke="#1c5c94" stroke-width="2.2"/><circle cx="11.7" cy="11" r="9.7" fill="none" stroke="#0c3458" stroke-width=".8"/><path d="M5 9 Q7 4.4 12 4" fill="none" stroke="#cfe4f4" stroke-width="1.6" opacity=".8"/>
<text x="11.9" y="16.4" text-anchor="middle" font-family="Liberation Sans,sans-serif" font-weight="bold" font-size="15" fill="#111">?</text></svg>
<div class="abs stext" style="left:125px">Select objects. Shift to extend select. Drag mouse to select multiple.</div>
<div class="ln dk" style="left:701px;top:1092px;width:1px;height:22px"></div>
<div class="ln wh" style="left:702px;top:1092px;width:1px;height:22px"></div>
<div class="abs stext" style="left:752px">Measurements</div>
<div class="abs" style="left:841px;top:1091px;width:204px;height:21px;border:1px solid;border-color:#808080 #fff #fff #808080;box-sizing:content-box"></div>
<svg style="left:1049px;top:1100px" width="16" height="16" viewBox="0 0 16 16"><path d="M15 3 L3 15 M15 7 L7 15 M15 11 L11 15" stroke="#808080" stroke-width="1.2"/><path d="M15 4 L4 15 M15 8 L8 15 M15 12 L12 15" stroke="#fff" stroke-width="1"/></svg>

<!-- outer window border -->
<div class="ln" style="left:0;top:0;width:1066px;height:1px;background:#7c7c7c"></div>
<div class="ln" style="left:0;top:0;width:1px;height:1119px;background:#7c7c7c"></div>
<div class="ln" style="left:1065px;top:0;width:1px;height:1119px;background:#9a9a9a"></div>
<div class="ln dk" style="left:1px;top:1115px;width:1064px;height:1px"></div>
<div class="ln wh" style="left:1px;top:1116px;width:1064px;height:1px"></div>
<div class="ln" style="left:25px;top:1116px;width:2px;height:1px;background:#808080"></div>
<div class="ln" style="left:0;top:1117px;width:1066px;height:2px;background:#8c8c8c"></div>
</body>
</html>
